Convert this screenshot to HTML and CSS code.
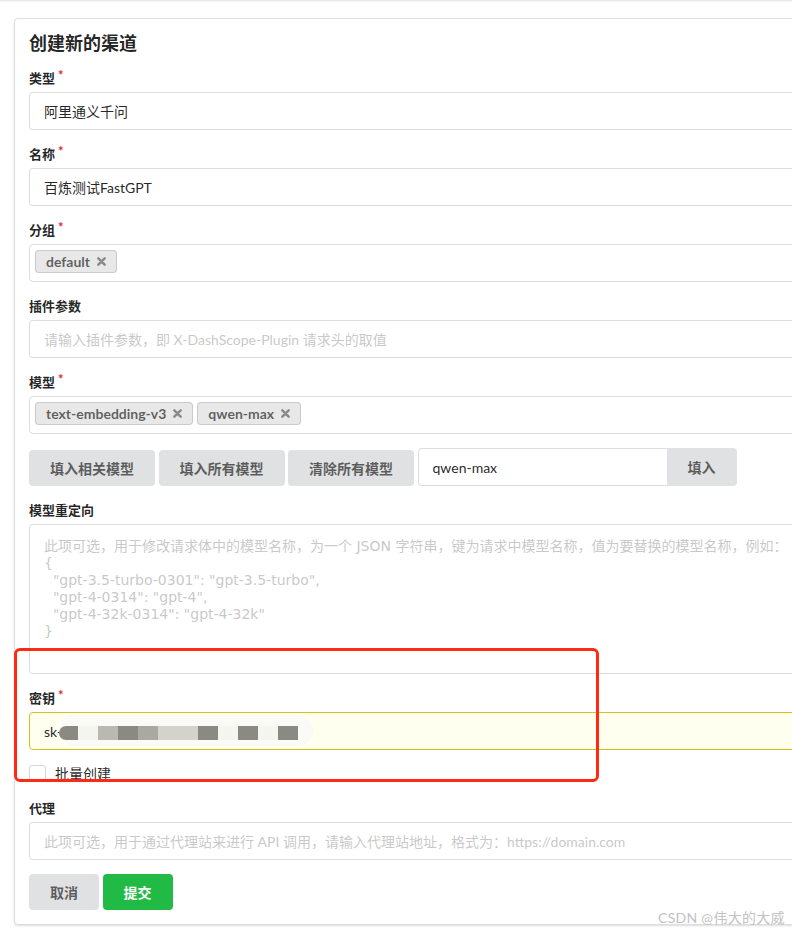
FILE: index.html
```html
<!DOCTYPE html>
<html lang="zh-CN">
<head>
    <meta charset="UTF-8">
    <meta name="viewport" content="width=device-width, initial-scale=1.0">
    <title>创建新的渠道</title>
    <link rel="stylesheet" href="styles.css">
</head>
<body>
<div class="page">
    <div class="topbar"></div>

    <!-- Channel form -->
    <div class="segment">
        <h3 class="header">创建新的渠道</h3>
        <form class="form">
            <div class="field required">
                <label>类型</label>
                <input class="text-input" type="text" value="阿里通义千问" readonly>
            </div>
            <div class="field required">
                <label>名称</label>
                <input class="text-input" type="text" value="百炼测试FastGPT">
            </div>
            <div class="field required">
                <label>分组</label>
                <div class="multi">
                    <span class="chip">default
                        <svg class="delete" viewBox="0 0 10 10"><path d="M1.5 1.5 L8.5 8.5 M8.5 1.5 L1.5 8.5"/></svg>
                    </span>
                </div>
            </div>
            <div class="field">
                <label>插件参数</label>
                <input class="text-input" type="text" placeholder="请输入插件参数，即 X-DashScope-Plugin 请求头的取值">
            </div>
            <div class="field required">
                <label>模型</label>
                <div class="multi">
                    <span class="chip">text-embedding-v3
                        <svg class="delete" viewBox="0 0 10 10"><path d="M1.5 1.5 L8.5 8.5 M8.5 1.5 L1.5 8.5"/></svg>
                    </span>
                    <span class="chip">qwen-max
                        <svg class="delete" viewBox="0 0 10 10"><path d="M1.5 1.5 L8.5 8.5 M8.5 1.5 L1.5 8.5"/></svg>
                    </span>
                </div>
            </div>
            <div class="model-actions">
                <button type="button" class="btn">填入相关模型</button>
                <button type="button" class="btn">填入所有模型</button>
                <button type="button" class="btn">清除所有模型</button>
                <div class="action-input">
                    <input type="text" value="qwen-max">
                    <button type="button" class="btn">填入</button>
                </div>
            </div>
            <div class="field">
                <label>模型重定向</label>
                <textarea class="textarea" placeholder="此项可选，用于修改请求体中的模型名称，为一个 JSON 字符串，键为请求中模型名称，值为要替换的模型名称，例如：&#10;{&#10;  &quot;gpt-3.5-turbo-0301&quot;: &quot;gpt-3.5-turbo&quot;,&#10;  &quot;gpt-4-0314&quot;: &quot;gpt-4&quot;,&#10;  &quot;gpt-4-32k-0314&quot;: &quot;gpt-4-32k&quot;&#10;}"></textarea>
            </div>
            <div class="field required">
                <label>密钥</label>
                <div class="key-wrap">
                    <input class="text-input key" type="text" value="sk-">
                    <!-- pixelated part of the key -->
                    <div class="mosaic">
                        <span class="m m-dark m-first"></span>
                        <span class="m m-pale"></span>
                        <span class="m m-soft"></span>
                        <span class="m m-dark"></span>
                        <span class="m m-mid"></span>
                        <span class="m m-light m-wide"></span>
                        <span class="m m-dark"></span>
                        <span class="m m-pale"></span>
                        <span class="m m-dark"></span>
                        <span class="m m-pale"></span>
                        <span class="m m-dark"></span>
                    </div>
                </div>
            </div>
            <div class="field checkbox">
                <span class="box"></span>
                <span class="check-label">批量创建</span>
            </div>
            <div class="field">
                <label>代理</label>
                <input class="text-input" type="text" placeholder="此项可选，用于通过代理站来进行 API 调用，请输入代理站地址，格式为：https://domain.com">
            </div>
            <div class="form-buttons">
                <button type="button" class="btn">取消</button>
                <button type="button" class="btn btn-submit">提交</button>
            </div>
        </form>
    </div>

    <!-- screenshot annotation -->
    <div class="annotation"></div>
    <div class="watermark">CSDN @伟大的大威</div>
</div>
</body>
</html>
```

FILE: styles.css
```css
* {
    box-sizing: border-box;
}

body {
    margin: 0;
    font-family: Lato, "Noto Sans CJK SC", sans-serif;
    font-size: 14px;
    line-height: 20px;
    color: rgba(0, 0, 0, 0.87);
    background: #fff;
}

.page {
    position: relative;
    width: 792px;
    height: 932px;
    overflow: hidden;
}

.topbar {
    height: 1px;
    background: #e8e8e8;
    box-shadow: 0 1px 2px rgba(0, 0, 0, 0.06);
}

/* Segment */
.segment {
    width: 1100px;
    margin: 17px 0 0 14px;
    padding: 14px;
    border: 1px solid rgba(34, 36, 38, 0.15);
    border-radius: 4px;
    box-shadow: 0 1px 2px 0 rgba(34, 36, 38, 0.15);
}

.header {
    margin: 0 0 14px;
    font-size: 18px;
    line-height: 21px;
    font-weight: 700;
}

/* Form fields */
.field {
    margin-bottom: 14px;
}

.field > label {
    display: block;
    font-size: 13px;
    font-weight: 700;
    line-height: 20px;
    margin-bottom: 4px;
}

.required > label::after {
    content: '*';
    display: inline-block;
    vertical-align: top;
    margin: -3px 0 0 3px;
    color: #db2828;
}

.text-input {
    display: block;
    width: 100%;
    height: 38px;
    padding: 0 14px;
    border: 1px solid rgba(34, 36, 38, 0.15);
    border-radius: 4px;
    font-family: inherit;
    font-size: 14px;
    color: rgba(0, 0, 0, 0.87);
    background: #fff;
    outline: none;
}

input::placeholder,
textarea::placeholder {
    color: rgba(191, 191, 191, 0.87);
}

/* Multiple dropdown with labels */
.multi {
    display: flex;
    align-items: flex-start;
    min-height: 38px;
    padding: 5px 29px 3px 5px;
    border: 1px solid rgba(34, 36, 38, 0.15);
    border-radius: 4px;
}

.chip {
    display: inline-flex;
    align-items: center;
    height: 23px;
    padding: 0 11px;
    margin-right: 4px;
    background: #e8e8e8;
    box-shadow: inset 0 0 0 1px rgba(34, 36, 38, 0.15);
    border-radius: 4px;
    color: rgba(0, 0, 0, 0.6);
    font-weight: 700;
    line-height: 1;
}

.delete {
    width: 9px;
    height: 9px;
    margin-left: 7px;
}

.delete path {
    stroke: rgba(0, 0, 0, 0.4);
    stroke-width: 2.8;
    stroke-linecap: round;
    fill: none;
}

/* Buttons */
.btn {
    height: 36px;
    padding: 0 21px;
    margin: 0 3.5px 0 0;
    border: none;
    border-radius: 4px;
    background: #e0e1e2;
    color: rgba(0, 0, 0, 0.6);
    font-family: Lato, "Noto Sans CJK SC", sans-serif;
    font-size: 14px;
    font-weight: 700;
    cursor: pointer;
}

.btn:hover {
    background: #cacbcd;
}

.model-actions {
    display: flex;
    align-items: flex-end;
    margin-bottom: 14px;
}

.action-input {
    display: flex;
    height: 38px;
}

.action-input input {
    width: 249px;
    height: 38px;
    padding: 0 14px;
    border: 1px solid rgba(34, 36, 38, 0.15);
    border-right: none;
    border-radius: 4px 0 0 4px;
    font-family: inherit;
    font-size: 14px;
    color: rgba(0, 0, 0, 0.87);
    outline: none;
}

.action-input .btn {
    width: 70px;
    height: 38px;
    margin: 0;
    border-radius: 0 4px 4px 0;
}

.textarea {
    display: block;
    width: 100%;
    height: 150px;
    padding: 13px 14px;
    border: 1px solid rgba(34, 36, 38, 0.15);
    border-radius: 4px;
    font-family: "DejaVu Sans", "Noto Sans CJK SC", sans-serif;
    font-size: 14px;
    line-height: 17px;
    resize: none;
    outline: none;
}

/* Autofilled key field */
.key-wrap {
    position: relative;
}

.text-input.key {
    background: #fffff0;
    border-color: #d5c315;
}

.mosaic {
    position: absolute;
    left: 30px;
    top: 2px;
    width: 254px;
    height: 32px;
    padding-top: 12px;
    display: flex;
    align-items: flex-start;
    border-radius: 16px;
    background: rgba(250, 250, 246, 0.9);
}

.m {
    width: 20px;
    height: 14px;
}

.m-wide {
    width: 40px;
}

.m-first {
    width: 19px;
    border-radius: 9px 0 0 9px;
}

.m-dark {
    background: #8a8a83;
}

.m-mid {
    background: #a9a9a2;
}

.m-soft {
    background: #b9b9b2;
}

.m-light {
    background: #d3d3cc;
}

.m-pale {
    background: #f5f5f0;
}

/* Checkbox */
.checkbox {
    display: flex;
    align-items: flex-start;
    height: 20px;
    padding-top: 1px;
}

.box {
    width: 17px;
    height: 17px;
    border: 1px solid #d4d4d5;
    border-radius: 3px;
    background: #fff;
}

.check-label {
    margin-left: 9px;
    line-height: 17px;
}

.form-buttons {
    display: flex;
}

.btn-submit {
    background: #21ba45;
    color: #fff;
}

.btn-submit:hover {
    background: #16ab39;
}

/* Screenshot overlays */
.annotation {
    position: absolute;
    left: 14px;
    top: 648px;
    width: 585px;
    height: 134px;
    border: 3px solid #ff2a12;
    border-radius: 6px;
    pointer-events: none;
}

.watermark {
    position: absolute;
    left: 658px;
    top: 909px;
    font-size: 14px;
    line-height: 18px;
    letter-spacing: 0.3px;
    color: #c2c2c2;
    white-space: nowrap;
}
```
